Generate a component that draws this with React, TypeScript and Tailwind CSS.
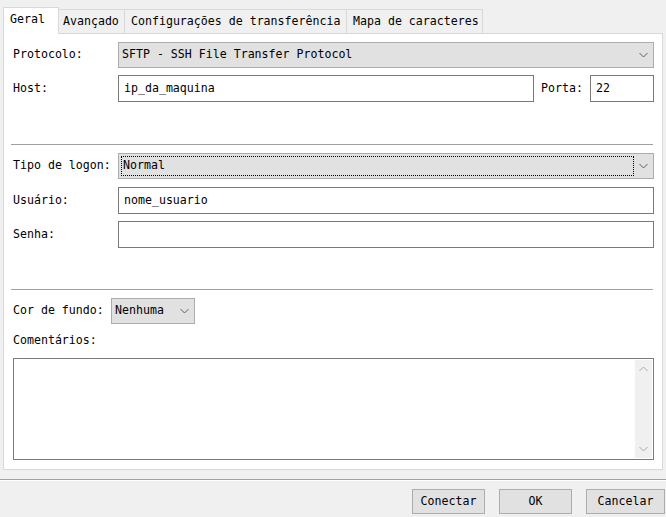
import React from 'react';

const Chevron: React.FC<{ up?: boolean; color?: string }> = ({ up, color = '#606060' }) => (
  <svg width="9" height="6" viewBox="0 0 9 6" className="block">
    <polyline
      points={up ? '0.5,5 4.5,1 8.5,5' : '0.5,1 4.5,5 8.5,1'}
      fill="none"
      stroke={color}
      strokeWidth="1"
    />
  </svg>
);

const Select: React.FC<{ value: string; className?: string; focused?: boolean }> = ({ value, className, focused }) => (
  <div className={`h-[26px] bg-[#e1e1e1] border border-[#adadad] flex items-center ${className || ''}`}>
    {focused ? (
      <div className="flex-1 h-[20px] ml-[2px] border border-dotted border-black flex items-center pl-[1px]">
        {value}
      </div>
    ) : (
      <div className="flex-1 pl-[3px]">{value}</div>
    )}
    <div className="w-[19px] flex justify-center">
      <Chevron />
    </div>
  </div>
);

const Input: React.FC<{ value?: string; className?: string }> = ({ value, className }) => (
  <div className={`h-[27px] bg-white border border-[#7a7a7a] flex items-center pl-[5px] ${className || ''}`}>
    {value}
  </div>
);

const Row: React.FC<{ label: string; labelWidth?: string; className?: string; children: React.ReactNode }> = ({
  label,
  labelWidth = 'w-[105px]',
  className,
  children,
}) => (
  <div className={`flex items-center ${className || ''}`}>
    <div className={`${labelWidth} shrink-0`}>{label}</div>
    {children}
  </div>
);

const App: React.FC = () => {
  return (
    <div
      className="w-[666px] h-[517px] bg-[#f0f0f0] flex flex-col text-[11.6px] text-black overflow-hidden"
      style={{ fontFamily: '"DejaVu Sans Mono", "Liberation Mono", monospace' }}
    >
      {/* Tabs */}
      <div className="flex items-end pt-[7px] pl-[3px]">
        <div className="w-[56px] h-[27px] bg-white border border-[#d9d9d9] border-b-0 pl-[6px] pt-[3px] relative z-10 -mb-px">
          Geral
        </div>
        <div className="w-[66px] h-[24px] border border-[#d9d9d9] border-l-0 border-b-0 flex items-center pl-[4px]">
          Avançado
        </div>
        <div className="w-[222px] h-[24px] border border-[#d9d9d9] border-l-0 border-b-0 flex items-center pl-[6px]">
          Configurações de transferência
        </div>
        <div className="w-[136px] h-[24px] border border-[#d9d9d9] border-l-0 border-b-0 flex items-center pl-[6px]">
          Mapa de caracteres
        </div>
      </div>

      {/* Panel */}
      <div className="mx-[3px] w-[660px] h-[437px] bg-white border border-[#d9d9d9] pl-[9px] pr-[8px] pt-[8px]">
        <Row label="Protocolo:">
          <Select value="SFTP - SSH File Transfer Protocol" className="flex-1" />
        </Row>
        <Row label="Host:" className="mt-[7px]">
          <Input value="ip_da_maquina" className="w-[416px]" />
          <div className="ml-[7px] w-[49px]">Porta:</div>
          <Input value="22" className="w-[64px]" />
        </Row>

        <div className="mt-[42px] mr-[1px] -ml-[2px] h-px bg-[#a0a0a0]" />

        <Row label="Tipo de logon:" className="mt-[8px]">
          <Select value="Normal" className="flex-1" focused />
        </Row>
        <Row label="Usuário:" className="mt-[8px]">
          <Input value="nome_usuario" className="flex-1" />
        </Row>
        <Row label="Senha:" className="mt-[7px]">
          <Input className="flex-1" />
        </Row>

        <div className="mt-[41px] mr-[1px] -ml-[2px] h-px bg-[#a0a0a0]" />

        <Row label="Cor de fundo:" labelWidth="w-[98px]" className="mt-[8px]">
          <Select value="Nenhuma" className="w-[84px]" />
        </Row>
        <div className="mt-[8px] h-[17px] leading-[17px]">Comentários:</div>

        <div className="mt-[9px] h-[102px] border border-[#7a7a7a] bg-white flex justify-end p-px">
          <div className="w-[17px] h-full bg-[#f0f0f0] flex flex-col items-center justify-between py-[6px]">
            <Chevron up color="#a8a8a8" />
            <Chevron color="#a8a8a8" />
          </div>
        </div>
      </div>

      {/* Footer */}
      <div className="mt-[9px] h-px bg-[#a0a0a0]" />
      <div className="h-px bg-white" />
      <div className="flex mt-[8px] pl-[412px] gap-[14px]">
        <button className="w-[73px] h-[25px] bg-[#e1e1e1] border border-[#adadad] flex items-center justify-center">
          Conectar
        </button>
        <button className="w-[73px] h-[25px] bg-[#e1e1e1] border border-[#adadad] flex items-center justify-center">
          OK
        </button>
        <button className="w-[79px] h-[25px] bg-[#e1e1e1] border border-[#adadad] flex items-center justify-center shrink-0">
          Cancelar
        </button>
      </div>
    </div>
  );
};

export default App;
